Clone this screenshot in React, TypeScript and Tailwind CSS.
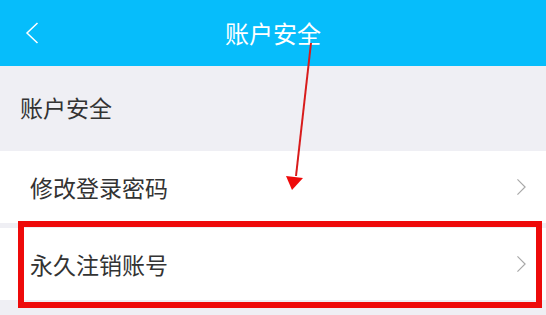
import React from "react"

const font = { fontFamily: '"Noto Sans CJK SC", "Noto Sans", sans-serif' }

function Chevron({ className }: { className?: string }) {
  return (
    <svg viewBox="0 0 12 20" className={className} fill="none" stroke="currentColor" strokeWidth="1.3">
      <path d="M1.5 1.5 L10 10 L1.5 18.5" />
    </svg>
  )
}

function Row({ label }: { label: string }) {
  return (
    <div className="flex h-[72px] items-center justify-between bg-white pl-[30px] pr-[19px]">
      <span className="text-[23px] leading-none text-[#333]">{label}</span>
      <Chevron className="h-[18px] w-[11px] text-[#a8a8a8]" />
    </div>
  )
}

export default function App() {
  return (
    <div className="relative h-[315px] w-[546px] overflow-hidden bg-[#efeff4]" style={font}>
      {/* header */}
      <div className="relative flex h-[66px] items-center justify-center bg-[#06bdfb]">
        <svg viewBox="0 0 14 22" className="absolute left-[25px] top-[22px] h-[22px] w-[14px]" fill="none" stroke="white" strokeWidth="1.5">
          <path d="M12.5 1 L2 11 L12.5 21" />
        </svg>
        <span className="text-[24px] leading-none text-white">账户安全</span>
      </div>

      {/* section label */}
      <div className="flex h-[85px] items-center pl-[20px] pb-[2px]">
        <span className="text-[23px] leading-none text-[#333]">账户安全</span>
      </div>

      <Row label="修改登录密码" />
      <div className="h-[5px]" />
      <Row label="永久注销账号" />

      {/* highlight box */}
      <div className="absolute left-[18px] top-[221px] h-[87px] w-[524px] border-[6px] border-[#ee0a0a]" />

      {/* arrow */}
      <svg className="absolute left-0 top-0 h-[315px] w-[546px]" viewBox="0 0 546 315">
        <line x1="311" y1="43" x2="296" y2="176" stroke="#d81b1b" strokeWidth="2" />
        <polygon points="286,176 303,178 292,190" fill="#ee0a0a" />
      </svg>
    </div>
  )
}
